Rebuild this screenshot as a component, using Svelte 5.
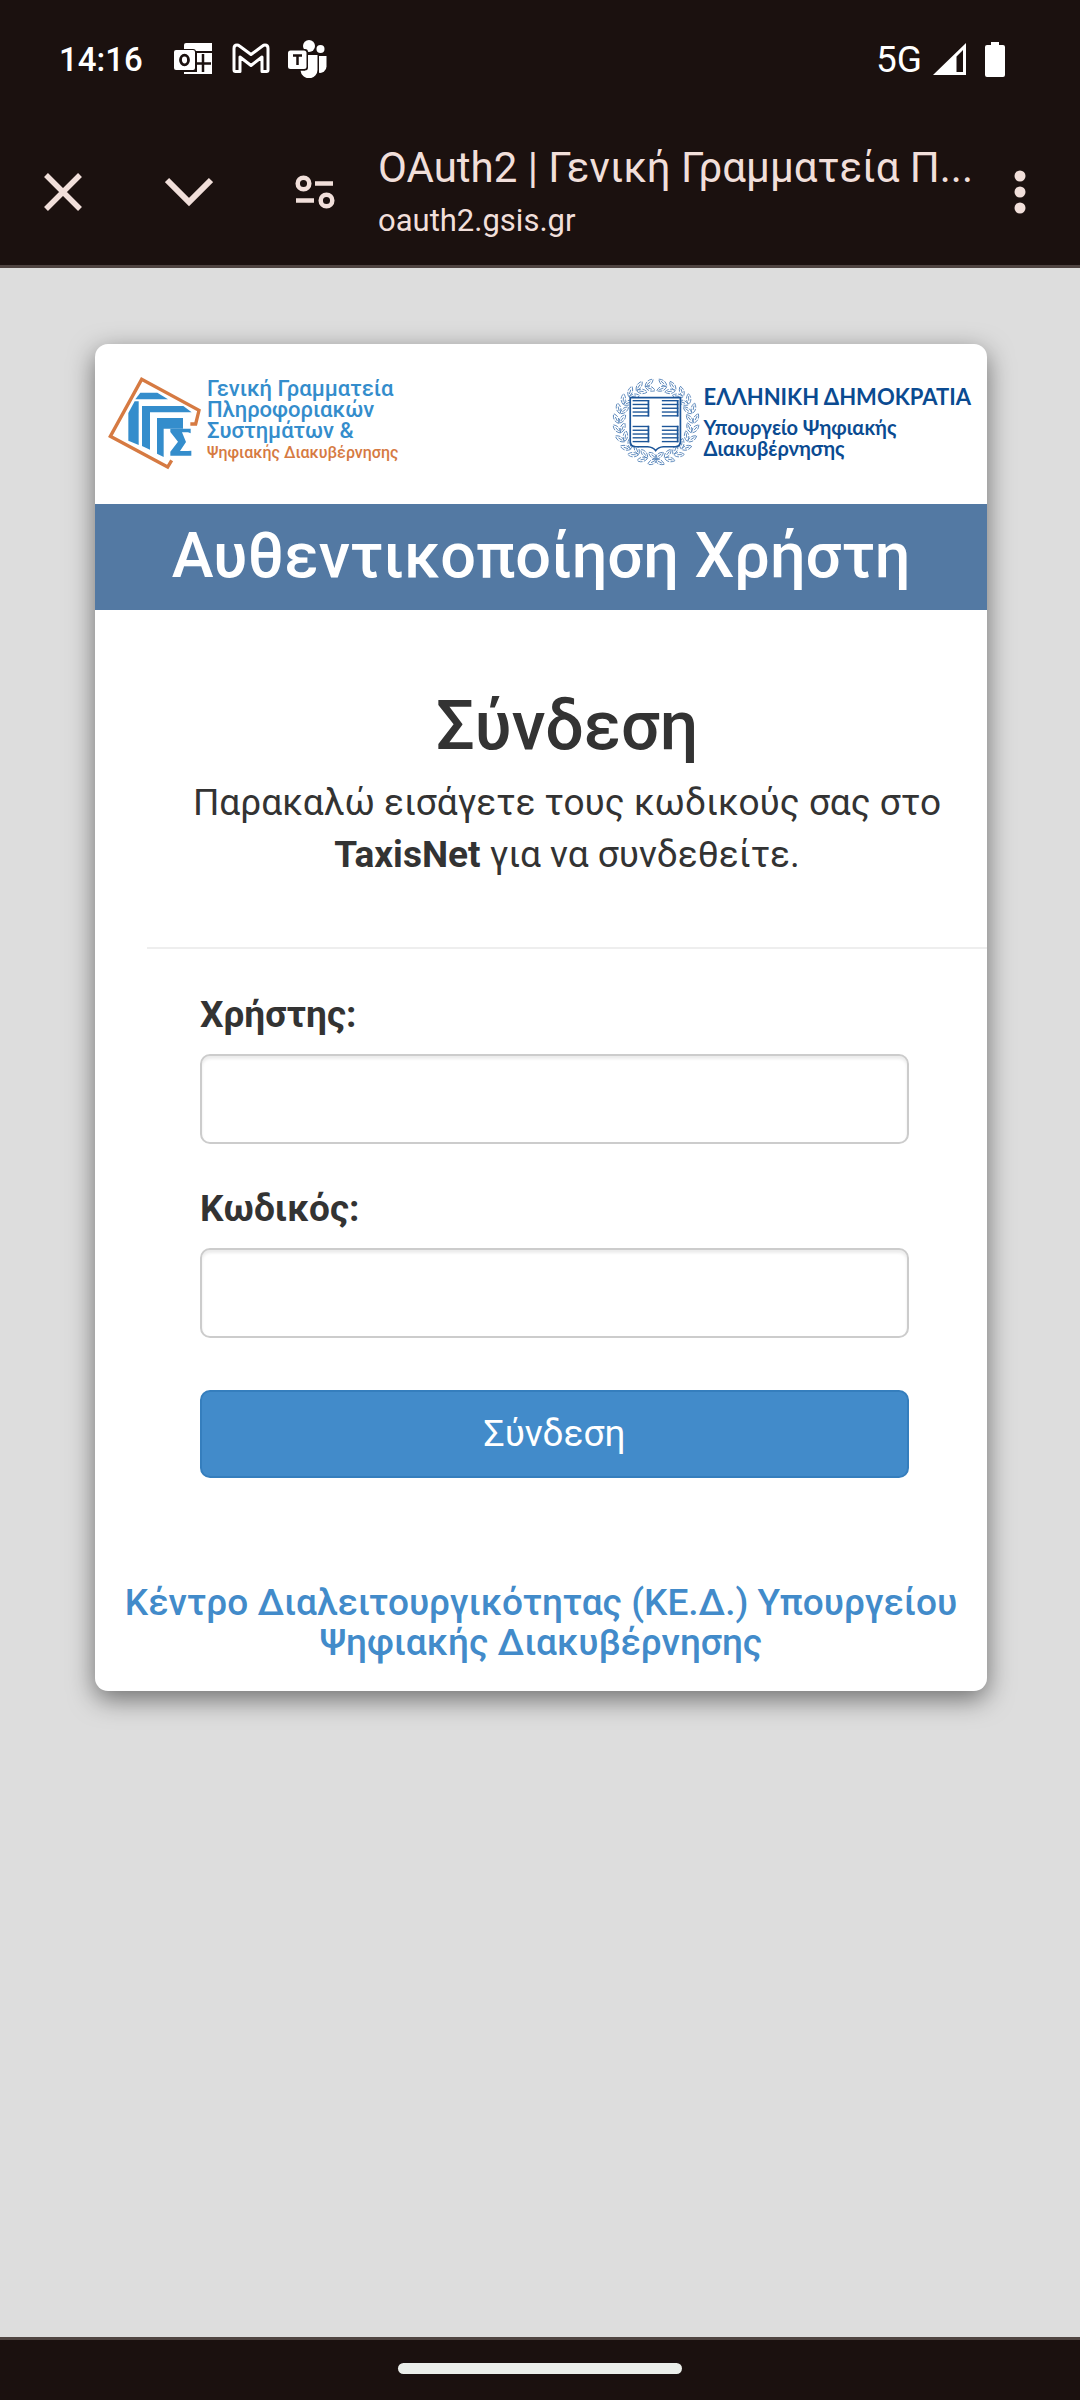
<script>
  // Leaves of the laurel wreath, mirrored on both sides of the shield.
  const leaves = [];
  for (let i = 0; i < 12; i++) {
    const angle = 10 + i * 15;
    for (const side of [-1, 1]) {
      for (const [radius, tilt] of [[116, 32], [98, -32]]) {
        const rad = (angle * Math.PI) / 180;
        leaves.push({
          x: Math.round(128 + side * radius * Math.sin(rad)),
          y: Math.round(128 - radius * Math.cos(rad)),
          turn: side * (angle + tilt)
        });
      }
    }
  }

  const stripes = [0, 1, 2, 3, 4];
  const quarters = [[60, 66], [145, 66], [60, 141], [145, 141]];

  let username = $state('');
  let password = $state('');
</script>

<div class="screen">
  <div class="status">
    <span class="time">14:16</span>
    <div class="notifications">
      <svg width="39" height="34" viewBox="0 0 39 34" aria-hidden="true">
        <path d="M10 3a2 2 0 0 1 2-2h26v8H10z" fill="#fff" />
        <path d="M23 11h15v21H10v-2h13z" fill="#fff" />
        <path d="M29 12v18M21 21.500h16" stroke="#1b110f" stroke-width="2.500" />
        <rect x="-1" y="7" width="23" height="22" rx="3" fill="#1b110f" />
        <rect x="0" y="8" width="21" height="20" rx="2" fill="#fff" />
        <ellipse cx="10.500" cy="18" rx="4" ry="4.800" fill="none" stroke="#1b110f" stroke-width="2.800" />
      </svg>
      <svg width="39" height="34" viewBox="0 0 39 34" aria-hidden="true">
        <path d="M3 28V6.500Q3 3 6 3q1.300 0 2.500 1L20 12.500 31.500 4q1.200-1 2.500-1 3 0 3 3.500V28q0 1.500-1.500 1.500H31V15L20 23.500 9 15v14.500H4.500Q3 29.500 3 28Z" fill="none" stroke="#fff" stroke-width="3" stroke-linejoin="round" />
      </svg>
      <svg width="39" height="38" viewBox="0 0 39 38" aria-hidden="true">
        <circle cx="21" cy="6" r="6" fill="#fff" />
        <circle cx="32.500" cy="9" r="4" fill="#fff" />
        <path d="M31 16h7.500v10.500a6.500 6.500 0 0 1-7.500 6.300z" fill="#fff" />
        <path d="M17 15h12.500v14a8.500 8.500 0 0 1-17 1.500H17z" fill="#fff" />
        <rect x="-1" y="9" width="21" height="21.500" rx="3" fill="#1b110f" />
        <rect x="0" y="10.500" width="18.500" height="18.500" rx="2.500" fill="#fff" />
        <path d="M5 15.500h9M9.500 15v10" stroke="#1b110f" stroke-width="2.500" />
      </svg>
    </div>
    <div class="system">
      <span class="network">5G</span>
      <svg width="33" height="34" viewBox="0 0 33 34" aria-hidden="true">
        <path fill-rule="evenodd" d="M33 1v32H0zM30 8l-6.500 6.500V30H30z" fill="#fff" />
      </svg>
      <svg class="battery" width="20" height="35" viewBox="0 0 20 35" aria-hidden="true">
        <path d="M6 0h8v3h4a2 2 0 0 1 2 2v28a2 2 0 0 1-2 2H2a2 2 0 0 1-2-2V5a2 2 0 0 1 2-2h4z" fill="#fff" />
      </svg>
    </div>
  </div>

  <header class="toolbar">
    <button type="button" aria-label="Κλείσιμο">
      <svg width="38" height="38" viewBox="0 0 38 38"><path d="M2 2l34 34M36 2L2 36" stroke="#f1dfda" stroke-width="5.500" /></svg>
    </button>
    <button type="button" aria-label="Ελαχιστοποίηση">
      <svg width="48" height="30" viewBox="0 0 48 30"><path d="M2 3l22 22L46 3" fill="none" stroke="#f1dfda" stroke-width="6" /></svg>
    </button>
    <button type="button" aria-label="Στοιχεία ιστοτόπου">
      <svg width="40" height="34" viewBox="0 0 40 34">
        <g fill="none" stroke="#f1dfda" stroke-width="4.500">
          <circle cx="8.500" cy="8.500" r="5.800" /><path d="M20 8.500h18M1 25.500h18" /><circle cx="31.500" cy="25.500" r="5.800" />
        </g>
      </svg>
    </button>
    <div class="address">
      <div class="title">OAuth2 | Γενική Γραμματεία Π...</div>
      <div class="host">oauth2.gsis.gr</div>
    </div>
    <button type="button" class="more" aria-label="Περισσότερα">
      <svg width="12" height="44" viewBox="0 0 12 44" fill="#f1dfda">
        <circle cx="6" cy="6" r="5.500" /><circle cx="6" cy="22" r="5.500" /><circle cx="6" cy="38" r="5.500" />
      </svg>
    </button>
  </header>

  <main>
    <section class="card">
      <div class="brands">
        <div class="gsis">
          <svg width="100" height="100" viewBox="0 0 300 300" aria-hidden="true">
            <path d="M256 150h16L282 109 110 16 16 187 188 279l12-20" fill="none" stroke="#d67a42" stroke-width="10" />
            <g fill="#348dcc">
              <path d="M106 56h51l32 20H91z" />
              <path d="M89 82h12v131l-31-13v-83z" />
              <path d="M111 96h124l25 19H135v112l-24-11z" />
              <path d="M156 132h78v32h-58v85l-20-10z" />
              <path d="M196 164h61v14l-8-3h-18l12 29-18 27h24l10-1v15h-63v-12l23-30-23-29z" />
            </g>
          </svg>
          <div class="gsis-name">
            <span>Γενική Γραμματεία</span>
            <span>Πληροφοριακών</span>
            <span>Συστημάτων &amp;</span>
            <span class="digital">Ψηφιακής Διακυβέρνησης</span>
          </div>
        </div>
        <div class="ministry">
          <svg width="88" height="88" viewBox="0 0 256 256" aria-hidden="true">
            <g fill="none" stroke="#5583b8" stroke-width="2.500">
              {#each leaves as leaf}
                <g transform="translate({leaf.x} {leaf.y}) rotate({leaf.turn})">
                  <path d="M-16 0Q0-13 16 0Q0 13-16 0Z" stroke-dasharray="14 4" />
                  <path d="M-8 0H5" />
                </g>
              {/each}
            </g>
            <path d="M53 57H199V184Q199 200 184 200H149Q135 201 127 211Q119 201 104 200H69Q53 200 53 184Z" fill="#fff" stroke="#1c5598" stroke-width="5" />
            {#each quarters as [x, y]}
              <g fill="none" stroke="#1c5598">
                {#each stripes as n}
                  <path d="M{x} {y + n * 11}h48" stroke-width="4" />
                {/each}
                <path d="M{x + 46} {y - 2}v48" stroke-width="5" />
              </g>
            {/each}
          </svg>
          <div class="ministry-name">
            <span class="republic">ΕΛΛΗΝΙΚΗ ΔΗΜΟΚΡΑΤΙΑ</span>
            <span>Υπουργείο Ψηφιακής</span>
            <span>Διακυβέρνησης</span>
          </div>
        </div>
      </div>

      <h1>Αυθεντικοποίηση Χρήστη</h1>

      <div class="content">
        <div class="intro">
          <h2>Σύνδεση</h2>
          <p>Παρακαλώ εισάγετε τους κωδικούς σας στο <strong>TaxisNet</strong> για να συνδεθείτε.</p>
        </div>
        <hr />
        <form onsubmit={(event) => event.preventDefault()}>
          <label for="username">Χρήστης:</label>
          <input id="username" type="text" bind:value={username} />
          <label for="password">Κωδικός:</label>
          <input id="password" type="password" bind:value={password} />
          <button type="submit">Σύνδεση</button>
        </form>
      </div>

      <footer>
        <a href="#ked">Κέντρο Διαλειτουργικότητας (ΚΕ.Δ.) Υπουργείου Ψηφιακής Διακυβέρνησης</a>
      </footer>
    </section>
  </main>

  <div class="navigation"><div class="handle"></div></div>
</div>

<style>
  :global(body) {
    margin: 0;
    background: #ddd;
  }
  .screen {
    display: flex;
    flex-direction: column;
    min-height: 100vh;
    font-family: Roboto, 'Noto Sans', sans-serif;
    color: #333;
    background: #ddd;
  }
  svg {
    display: block;
    flex: none;
  }
  .status {
    display: flex;
    align-items: center;
    height: 118px;
    padding: 0 75px 0 59px;
    background: #1b110f;
    color: #fff;
  }
  .time {
    font-size: 33px;
    font-weight: 500;
  }
  .notifications {
    display: flex;
    align-items: center;
    gap: 18px;
    margin-left: 31px;
  }
  .system {
    display: flex;
    align-items: center;
    gap: 11px;
    margin-left: auto;
  }
  .network {
    font-size: 37px;
  }
  .battery {
    margin-left: 8px;
  }
  .toolbar {
    display: flex;
    align-items: center;
    height: 147px;
    border-bottom: 3px solid #4f4441;
    background: #1b110f;
    color: #f1dfda;
  }
  .toolbar button {
    display: flex;
    align-items: center;
    justify-content: center;
    width: 126px;
    height: 126px;
    padding: 0;
    border: 0;
    background: none;
  }
  .toolbar .more {
    width: 120px;
  }
  .address {
    flex: 1;
    min-width: 0;
    white-space: nowrap;
  }
  .title {
    font-size: 42px;
    line-height: 58px;
  }
  .host {
    font-size: 31px;
    line-height: 48px;
  }
  main {
    flex: 1;
    padding: 76px 93px 76px 95px;
  }
  .card {
    border-radius: 13px;
    background: #fff;
    box-shadow: 0 8px 26px rgba(0, 0, 0, 0.5);
  }
  .brands {
    display: flex;
    justify-content: space-between;
    align-items: center;
    height: 160px;
    padding: 0 16px 0 10px;
  }
  .gsis,
  .ministry {
    display: flex;
    align-items: center;
  }
  .gsis {
    gap: 2px;
  }
  .gsis-name {
    display: flex;
    flex-direction: column;
    padding-bottom: 5px;
    font-size: 22px;
    font-weight: 500;
    line-height: 21px;
    color: #348dcc;
  }
  .gsis-name .digital {
    font-size: 16px;
    line-height: 24px;
    color: #d67a42;
  }
  .ministry {
    gap: 4px;
    padding-bottom: 4px;
  }
  .ministry-name {
    display: flex;
    flex-direction: column;
    padding-bottom: 4px;
    font: 700 20px/21px Lato, sans-serif;
    color: #0b4b91;
  }
  .ministry-name .republic {
    padding-bottom: 4px;
    font-size: 22px;
    line-height: 32px;
  }
  h1,
  h2,
  p {
    margin: 0;
    text-align: center;
  }
  h1 {
    padding: 17px 0 19px;
    background: #5379a3;
    color: #fff;
    font-size: 63px;
    font-weight: 500;
    line-height: 70px;
  }
  .content {
    padding: 79px 0 0 52px;
  }
  h2 {
    margin-bottom: 14px;
    font-size: 68px;
    font-weight: 500;
    line-height: 74px;
  }
  p {
    padding: 0 40px;
    font-size: 37px;
    line-height: 52px;
  }
  strong {
    font-weight: 700;
  }
  hr {
    height: 2px;
    margin: 66px 0 40px;
    border: 0;
    background: #eee;
  }
  form {
    display: flex;
    flex-direction: column;
    padding: 0 78px 0 53px;
  }
  label {
    margin-bottom: 13px;
    font-size: 37px;
    font-weight: 700;
    line-height: 52px;
  }
  input {
    box-sizing: border-box;
    width: 100%;
    height: 90px;
    margin: 0 0 39px;
    padding: 16px 32px;
    border: 2px solid #ccc;
    border-radius: 10px;
    background: #fff;
    box-shadow: inset 0 3px 3px rgba(0, 0, 0, 0.08);
    color: #555;
    font: 37px/52px Roboto, sans-serif;
  }
  #password {
    margin-bottom: 52px;
  }
  form button {
    height: 88px;
    padding: 0;
    border: 2px solid #357ebd;
    border-radius: 10px;
    background: #428bca;
    color: #fff;
    font: 37px/52px Roboto, sans-serif;
  }
  footer {
    padding: 105px 24px 28px;
    text-align: center;
    font-size: 37px;
    font-weight: 500;
    line-height: 40px;
  }
  a {
    color: #428bca;
    text-decoration: none;
  }
  .navigation {
    display: flex;
    align-items: center;
    justify-content: center;
    box-sizing: border-box;
    height: 63px;
    padding-bottom: 3px;
    border-top: 3px solid #4f4441;
    background: #1b110f;
  }
  .handle {
    width: 284px;
    height: 11px;
    border-radius: 6px;
    background: #ebeeea;
  }
</style>
